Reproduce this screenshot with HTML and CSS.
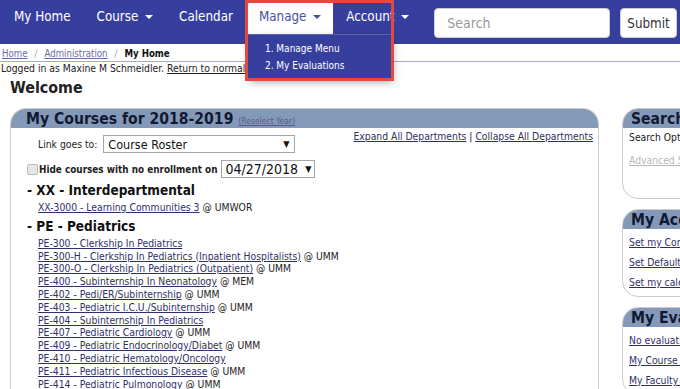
FILE: index.html
```html
<!DOCTYPE html>
<html lang="en">
<head>
  <meta charset="UTF-8">
  <title>My Home</title>
  <link rel="stylesheet" href="styles.css">
</head>
<body>

  <!-- Top navigation -->
  <nav class="topnav">
    <a class="nav-item" href="#">My Home</a>
    <a class="nav-item" href="#">Course <span class="caret"></span></a>
    <a class="nav-item" href="#">Calendar</a>
    <div class="nav-item manage">Manage <span class="caret"></span>
      <ul class="dropdown">
        <li>1. Manage Menu</li>
        <li>2. My Evaluations</li>
      </ul>
      <div class="highlight"></div>
    </div>
    <a class="nav-item" href="#">Account <span class="caret"></span></a>
    <form class="nav-search">
      <input type="text" placeholder="Search">
      <button type="button">Submit</button>
    </form>
  </nav>

  <div class="breadcrumb">
    <a href="#">Home</a><span class="sep">/</span><a href="#">Administration</a><span class="sep">/</span><strong>My Home</strong>
  </div>
  <div class="login-info">Logged in as Maxine M Schmeidler. <a href="#">Return to normal user</a></div>

  <h2 class="welcome">Welcome</h2>

  <div class="columns">

    <!-- My Courses -->
    <div class="panel main-panel">
      <div class="panel-head">My Courses for 2018-2019 <a class="small-link" href="#">(Reselect Year)</a></div>
      <div class="panel-body">
        <div class="row">
          <span class="link-label">Link goes to:</span>
          <span class="fake-select course-select">Course Roster <span class="arrow">▼</span></span>
          <span class="expand-links"><a href="#">Expand All Departments</a> | <a href="#">Collapse All Departments</a></span>
        </div>
        <div class="row filter-row">
          <span class="checkbox"></span>
          <strong>Hide courses with no enrollment on</strong>
          <span class="fake-select date-select">04/27/2018 <span class="arrow">▼</span></span>
        </div>

        <h3 class="dept">- XX - Interdepartmental</h3>
        <ul class="courses">
          <li><a href="#">XX-3000 - Learning Communities 3</a> @ UMWOR</li>
        </ul>

        <h3 class="dept">- PE - Pediatrics</h3>
        <ul class="courses">
          <li><a href="#">PE-300 - Clerkship In Pediatrics</a></li>
          <li><a href="#">PE-300-H - Clerkship In Pediatrics (Inpatient Hospitalists)</a> @ UMM</li>
          <li><a href="#">PE-300-O - Clerkship In Pediatrics (Outpatient)</a> @ UMM</li>
          <li><a href="#">PE-400 - Subinternship In Neonatology</a> @ MEM</li>
          <li><a href="#">PE-402 - Pedi/ER/Subinternship</a> @ UMM</li>
          <li><a href="#">PE-403 - Pediatric I.C.U./Subinternship</a> @ UMM</li>
          <li><a href="#">PE-404 - Subinternship In Pediatrics</a></li>
          <li><a href="#">PE-407 - Pediatric Cardiology</a> @ UMM</li>
          <li><a href="#">PE-409 - Pediatric Endocrinology/Diabet</a> @ UMM</li>
          <li><a href="#">PE-410 - Pediatric Hematology/Oncology</a></li>
          <li><a href="#">PE-411 - Pediatric Infectious Disease</a> @ UMM</li>
          <li><a href="#">PE-414 - Pediatric Pulmonology</a> @ UMM</li>
        </ul>
      </div>
    </div>

    <!-- Side panels -->
    <div class="side">
      <div class="panel side-panel search-panel">
        <div class="panel-head">Search Courses</div>
        <div class="panel-body">
          <div class="side-text">Search Options</div>
          <a class="muted-link" href="#">Advanced Search</a>
        </div>
      </div>
      <div class="panel side-panel">
        <div class="panel-head">My Account</div>
        <div class="panel-body">
          <a class="side-link" href="#">Set my Contact Info</a>
          <a class="side-link" href="#">Set Default Page</a>
          <a class="side-link" href="#">Set my calendar</a>
        </div>
      </div>
      <div class="panel side-panel">
        <div class="panel-head">My Evaluations</div>
        <div class="panel-body">
          <a class="side-link" href="#">No evaluations due</a>
          <a class="side-link" href="#">My Course Evaluations</a>
          <a class="side-link" href="#">My Faculty Evaluations</a>
        </div>
      </div>
    </div>

  </div>

</body>
</html>
```

FILE: styles.css
```css
body {
  margin: 0;
  font-family: "DejaVu Sans Condensed", "DejaVu Sans", sans-serif;
  font-size: 10.3px;
  color: #222;
  background-color: #fff;
  overflow: hidden;
}

a {
  color: #2f2f6b;
}

/* Top navigation */
.topnav {
  display: flex;
  align-items: flex-start;
  height: 44px;
  padding-left: 1px;
  background-color: #373f9e;
}

.nav-item {
  height: 34px;
  line-height: 34px;
  padding: 0 13px;
  color: #fff;
  font-size: 13.3px;
  text-decoration: none;
  white-space: nowrap;
}

.caret {
  display: inline-block;
  width: 0;
  height: 0;
  margin-left: 3px;
  vertical-align: middle;
  border-top: 4px solid currentColor;
  border-left: 4px solid transparent;
  border-right: 4px solid transparent;
}

.manage {
  position: relative;
  margin-left: 2px;
  padding: 0 12px 0 11px;
  background-color: #fff;
  color: #4a4f9e;
}

.dropdown {
  position: absolute;
  top: 34px;
  left: 0;
  width: 143px;
  height: 44px;
  margin: 0;
  padding: 5px 0 0 0;
  box-sizing: border-box;
  list-style: none;
  background-color: #373f9e;
  border-top: 1px solid #5a61b0;
  box-shadow: 2px 4px 8px rgba(0, 0, 0, 0.35);
  z-index: 5;
}

.dropdown li {
  padding-left: 17px;
  line-height: 17px;
  font-size: 10px;
  color: #fff;
}

.highlight {
  position: absolute;
  top: 0;
  left: -3px;
  width: 143px;
  height: 75px;
  border: 3px solid #e5483c;
  z-index: 6;
}

.nav-search {
  display: flex;
  margin: 8px 0 0 12px;
}

.nav-search input {
  width: 176px;
  height: 30px;
  box-sizing: border-box;
  padding: 0 12px;
  border: 1px solid #ccc;
  border-radius: 4px;
  font-family: inherit;
  font-size: 14px;
}

.nav-search input::placeholder {
  color: #999;
}

.nav-search button {
  margin-left: 10px;
  height: 30px;
  padding: 0 6px;
  border: 1px solid #ccc;
  border-radius: 4px;
  background-color: #fff;
  color: #333;
  font-family: inherit;
  font-size: 13.3px;
  white-space: nowrap;
}

/* Breadcrumb */
.breadcrumb {
  padding: 3px 2px 0;
  line-height: 14px;
  font-size: 9.6px;
  border-bottom: 1px solid #a3acc8;
  white-space: nowrap;
}

.breadcrumb a {
  color: #6b6b99;
}

.breadcrumb .sep {
  margin: 0 7px;
  color: #aaa;
}

.breadcrumb strong {
  color: #111;
}

.login-info {
  padding-left: 1px;
  line-height: 12px;
  white-space: nowrap;
}

.login-info a {
  color: #222;
}

.welcome {
  margin: 4px 10px 0;
  font-size: 15.9px;
  line-height: 19px;
  color: #222;
}

/* Columns */
.columns {
  display: flex;
  align-items: flex-start;
  gap: 23px;
  margin-top: 11px;
  padding-left: 10px;
}

.panel {
  border: 1px solid #ccc;
  background-color: #fff;
  flex-shrink: 0;
}

.panel-head {
  height: 19px;
  line-height: 20px;
  background-color: #8499b8;
  font-size: 15.6px;
  font-weight: bold;
  color: #121a33;
  white-space: nowrap;
  overflow: hidden;
}

.main-panel {
  width: 587px;
  height: 320px;
  border-radius: 16px 16px 0 0;
  border-bottom: none;
}

.main-panel .panel-head {
  padding-left: 15px;
  border-radius: 15px 15px 0 0;
}

.small-link {
  font-size: 8.5px;
  font-weight: normal;
  color: #5a5a8c;
}

.main-panel .panel-body {
  padding: 7px 5px 0 16px;
}

.row {
  display: flex;
  align-items: center;
  white-space: nowrap;
}

.link-label {
  margin: 0 6px 0 11px;
}

.fake-select {
  display: inline-flex;
  justify-content: space-between;
  align-items: center;
  box-sizing: border-box;
  height: 18px;
  padding: 0 5px 0 4px;
  border: 1px solid #a6a6a6;
  font-size: 12.5px;
  color: #111;
}

.fake-select .arrow {
  font-size: 9px;
}

.course-select {
  width: 192px;
}

.expand-links {
  margin-left: auto;
  align-self: flex-start;
  margin-top: -5px;
}

.filter-row {
  margin-top: 7px;
}

.checkbox {
  width: 9px;
  height: 9px;
  border: 1px solid #bbb;
  background-color: #e6e6e6;
  border-radius: 2px;
}

.filter-row strong {
  margin: 0 4px 0 1px;
  font-size: 9.9px;
}

.date-select {
  width: 94px;
  font-size: 14px;
  padding: 0 3px 0 3px;
}

.dept {
  margin: 4px 0 0;
  font-size: 13.5px;
  line-height: 17px;
  color: #111;
}

.courses {
  margin: 2px 0 0 11px;
  padding: 0;
  list-style: none;
}

.courses li {
  line-height: 12.8px;
  white-space: nowrap;
}

/* Side column */
.side {
  display: flex;
  flex-direction: column;
  gap: 10px;
  width: 200px;
  flex-shrink: 0;
}

.side-panel {
  border-radius: 16px 0 0 16px;
}

.side-panel .panel-head {
  padding-left: 8px;
  border-radius: 15px 0 0 0;
}

.side-panel .panel-body {
  padding: 3px 6px 0;
  height: 64px;
}

.search-panel .panel-body {
  height: 68px;
  padding-top: 2px;
}

.side-text {
  line-height: 14px;
}

.muted-link {
  display: block;
  margin-top: 10px;
  color: #b8b8b8;
}

.side-link {
  display: block;
  line-height: 20px;
}
```
